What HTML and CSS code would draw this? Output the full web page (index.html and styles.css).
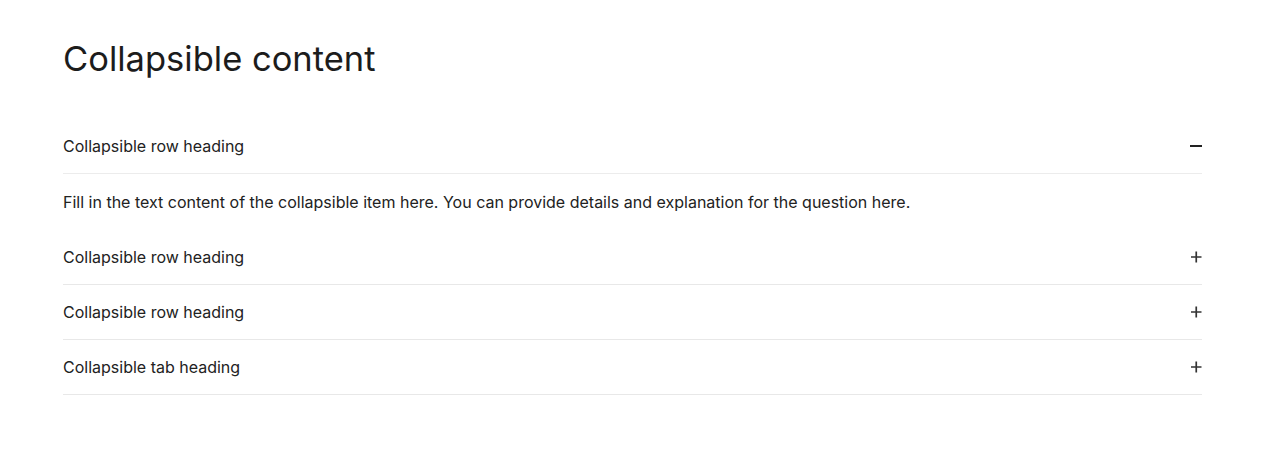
FILE: index.html
```html
<!DOCTYPE html>
<html lang="en">
<head>
<meta charset="utf-8">
<link rel="stylesheet" href="styles.css">
</head>
<body>
<main class="page">
  <h1 class="title">Collapsible content</h1>
  <div class="accordion">
    <div class="item open">
      <div class="row">
        <span class="row-label">Collapsible row heading</span>
        <svg class="icon" width="12" height="12" viewBox="0 0 12 12"><path d="M0 6h12" stroke="#222" stroke-width="2"/></svg>
      </div>
      <div class="panel">Fill in the text content of the collapsible item here. You can provide details and explanation for the question here.</div>
    </div>
    <div class="item">
      <div class="row">
        <span class="row-label">Collapsible row heading</span>
        <svg class="icon" width="12" height="12" viewBox="0 0 12 12"><path d="M1 6h10.5M6.25 0.5v11" stroke="#333" stroke-width="1.7"/></svg>
      </div>
    </div>
    <div class="item">
      <div class="row">
        <span class="row-label">Collapsible row heading</span>
        <svg class="icon" width="12" height="12" viewBox="0 0 12 12"><path d="M1 6h10.5M6.25 0.5v11" stroke="#333" stroke-width="1.7"/></svg>
      </div>
    </div>
    <div class="item">
      <div class="row">
        <span class="row-label">Collapsible tab heading</span>
        <svg class="icon" width="12" height="12" viewBox="0 0 12 12"><path d="M1 6h10.5M6.25 0.5v11" stroke="#333" stroke-width="1.7"/></svg>
      </div>
    </div>
  </div>
</main>
</body>
</html>
```
FILE: styles.css
```css
* { box-sizing: border-box; }
html, body { margin: 0; background: #fff; }
body { font-family: Inter, "Noto Sans", sans-serif; color: #222; }
.page { padding: 36px 62px 0 63px; }
.title { margin: 0 0 37px; font-size: 34.5px; font-weight: 400; line-height: 46px; color: #1c1c1c; }
.row { display: flex; align-items: center; justify-content: space-between; height: 55px; border-bottom: 1px solid #e8e8e8; font-size: 16px; }
.item.open .row { border-bottom-color: #ececec; }
.icon { display: block; }
.panel { padding: 16px 0; font-size: 16px; line-height: 24px; color: #222; }
```
